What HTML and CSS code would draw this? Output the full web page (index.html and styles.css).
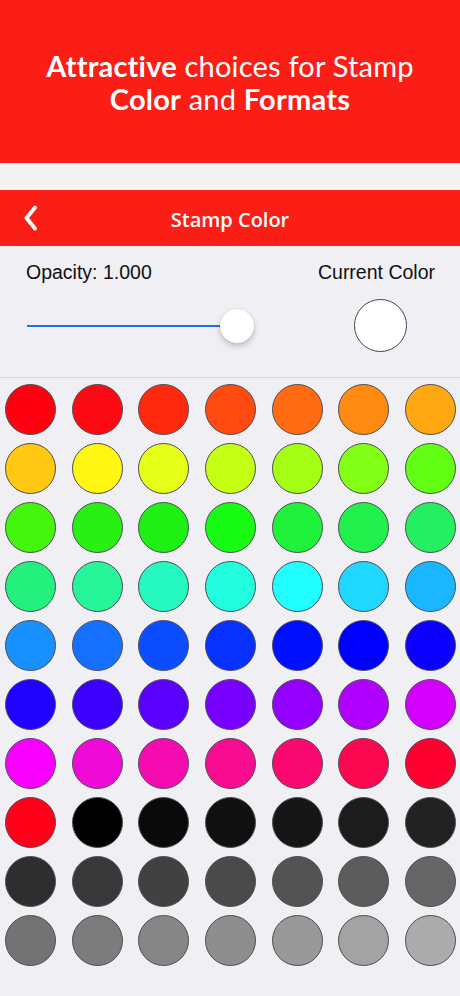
FILE: index.html
```html
<!DOCTYPE html>
<html lang="en">
<head>
    <meta charset="UTF-8">
    <meta name="viewport" content="width=device-width, initial-scale=1.0">
    <title>Stamp Color</title>
    <link rel="stylesheet" href="styles.css">
</head>
<body>
    <!-- banner -->
    <header class="banner">
        <h1><b>Attractive</b> choices for Stamp<br><b>Color</b> and <b>Formats</b></h1>
    </header>
    <div class="strip"></div>

    <!-- nav bar -->
    <nav class="navbar">
        <span class="back">
            <svg width="16" height="26" viewBox="0 0 16 26"><path d="M12 2.5 L3.5 13 L12 23.5" fill="none" stroke="#fff" stroke-width="3.8" stroke-linecap="round" stroke-linejoin="round"/></svg>
        </span>
        <span class="nav-title">Stamp Color</span>
    </nav>

    <!-- opacity + current color -->
    <section class="controls">
        <div class="left">
            <div class="label">Opacity: 1.000</div>
            <div class="slider">
                <div class="track"></div>
                <div class="thumb"></div>
            </div>
        </div>
        <div class="right">
            <div class="label">Current Color</div>
            <div class="current"></div>
        </div>
    </section>

    <!-- palette -->
    <section class="grid" id="grid"></section>

    <script>
        const colors = [
            '#ff0010', '#fc0a14', '#ff2a0e', '#ff4a10', '#ff6a12', '#ff8a12', '#ffa812',
            '#ffc812', '#fff614', '#e6ff16', '#c4ff14', '#a4ff14', '#82ff14', '#62ff14',
            '#44f50e', '#2aef14', '#1ef014', '#18fb14', '#20f23c', '#22f04c', '#26ee62',
            '#24f07e', '#26f59a', '#24f9bf', '#22fde0', '#20feff', '#20d8ff', '#1ab6ff',
            '#1890ff', '#1670ff', '#0c4eff', '#0830ff', '#0010ff', '#0000ff', '#0c00ff',
            '#2000ff', '#3c00ff', '#5a00ff', '#7800ff', '#9400ff', '#b200ff', '#d400ff',
            '#f800ff', '#f00ad8', '#f40cb0', '#f80c90', '#fa0a70', '#fc0850', '#ff0030',
            '#ff0018', '#000000', '#0a0a0a', '#101010', '#161616', '#1c1c1c', '#222222',
            '#2e2e2e', '#393939', '#414141', '#4a4a4a', '#535353', '#5c5c5c', '#666666',
            '#737373', '#7c7c7c', '#868686', '#8e8e8e', '#999999', '#a3a3a3', '#acacac'
        ];
        const grid = document.getElementById('grid');
        colors.forEach(c => {
            const dot = document.createElement('div');
            dot.className = 'dot';
            dot.style.background = c;
            grid.appendChild(dot);
        });
    </script>
</body>
</html>
```

FILE: styles.css
```css
body {
    margin: 0;
    width: 460px;
    height: 996px;
    overflow: hidden;
    background-color: #efeff4;
    font-family: "Open Sans", "Liberation Sans", sans-serif;
}

/* banner */
.banner {
    height: 163px;
    background-color: #fa1e17;
    display: flex;
    align-items: center;
    justify-content: center;
}

.banner h1 {
    margin: 0;
    color: #fff;
    font-family: "Lato", "Open Sans", sans-serif;
    font-weight: 400;
    font-size: 29px;
    line-height: 33px;
    text-align: center;
    letter-spacing: 0.2px;
}

.banner h1 b {
    font-weight: 700;
}

.strip {
    height: 27px;
    background-color: #f3f3f3;
}

/* nav bar */
.navbar {
    height: 56px;
    background-color: #fa1e17;
    display: flex;
    align-items: center;
    justify-content: center;
    position: relative;
}

.back {
    position: absolute;
    left: 23px;
    top: 15px;
    display: flex;
}

.nav-title {
    color: #fff;
    font-family: "Open Sans", sans-serif;
    font-weight: 600;
    font-size: 20px;
    margin-top: 2px;
}

/* controls */
.controls {
    height: 131px;
    border-bottom: 1px solid #d8d8dc;
    display: flex;
    justify-content: space-between;
    padding: 0 25px 0 26px;
}

.label {
    font-family: "Liberation Sans", sans-serif;
    font-size: 19.5px;
    color: #111;
    margin-top: 16px;
    line-height: 20px;
}

.left {
    width: 232px;
}

.slider {
    position: relative;
    height: 40px;
    margin-top: 24px;
}

.track {
    position: absolute;
    left: 1px;
    right: 12px;
    top: 19px;
    height: 2px;
    background-color: #1c6ef2;
}

.thumb {
    position: absolute;
    left: 194px;
    top: 3px;
    width: 34px;
    height: 34px;
    border-radius: 50%;
    background: #fff;
    box-shadow: 0 3px 6px rgba(0, 0, 0, 0.22), 0 0 1px rgba(0, 0, 0, 0.15);
}

.right {
    display: flex;
    flex-direction: column;
    align-items: flex-end;
}

.current {
    width: 51px;
    height: 51px;
    border-radius: 50%;
    background: #fff;
    border: 1px solid #444;
    margin: 17px 28px 0 0;
}

/* palette */
.grid {
    display: grid;
    grid-template-columns: repeat(7, 51px);
    justify-content: space-between;
    row-gap: 8px;
    padding: 6px 4px 0 5px;
}

.dot {
    width: 51px;
    height: 51px;
    border-radius: 50%;
    box-sizing: border-box;
    border: 1px solid #4d4d55;
}
```
